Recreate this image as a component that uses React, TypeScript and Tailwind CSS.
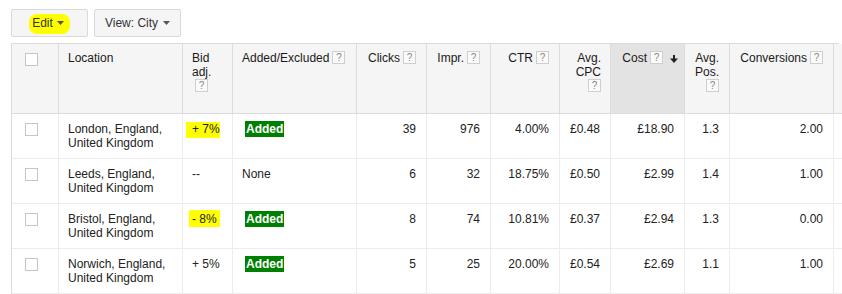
import React from "react";

const Q = ({ cls = "" }: { cls?: string }) => (
  <span
    className={
      "inline-block w-[13px] h-[13px] border border-[#cfcfcf] bg-[#fafafa] text-[#888] text-[10px] leading-[11px] text-center align-text-top " +
      cls
    }
  >
    ?
  </span>
);

const Check = () => (
  <span className="block w-[13px] h-[13px] border border-[#c6c6c6] bg-white" />
);

const Caret = () => (
  <svg width="7" height="4" viewBox="0 0 7 4" className="block">
    <polygon points="0,0 7,0 3.5,4" fill="#555" />
  </svg>
);

const cols =
  "grid grid-cols-[47px_124px_50px_124px_70px_64px_69px_51px_74px_45px_104px_100px]";

const hc = "bg-[#f5f5f5] border-r border-b border-[#dcdcdc] pt-[7px] leading-[14px] text-[#1a1a1a]";
const bc = "border-r border-b border-[#ececec] pt-[8px] leading-[14px]";

type Row = {
  loc: string;
  bid: React.ReactNode;
  added: React.ReactNode;
  clicks: string;
  impr: string;
  ctr: string;
  cpc: string;
  cost: string;
  pos: string;
  conv: string;
};

const AddedBadge = () => (
  <span className="ml-[3px] bg-[#008000] text-white font-bold px-[1px] py-[1px]">Added</span>
);

const rows: Row[] = [
  {
    loc: "London, England, United Kingdom",
    bid: <span className="bg-[#ffff00] -ml-[6px] pl-[6px] pb-[2px]">+ 7%</span>,
    added: <AddedBadge />,
    clicks: "39",
    impr: "976",
    ctr: "4.00%",
    cpc: "£0.48",
    cost: "£18.90",
    pos: "1.3",
    conv: "2.00",
  },
  {
    loc: "Leeds, England, United Kingdom",
    bid: <span>--</span>,
    added: <span>None</span>,
    clicks: "6",
    impr: "32",
    ctr: "18.75%",
    cpc: "£0.50",
    cost: "£2.99",
    pos: "1.4",
    conv: "1.00",
  },
  {
    loc: "Bristol, England, United Kingdom",
    bid: <span className="bg-[#ffff00] -ml-[3px] px-[3px] pt-[2px] pb-[1px]">- 8%</span>,
    added: <AddedBadge />,
    clicks: "8",
    impr: "74",
    ctr: "10.81%",
    cpc: "£0.37",
    cost: "£2.94",
    pos: "1.3",
    conv: "0.00",
  },
  {
    loc: "Norwich, England, United Kingdom",
    bid: <span>+ 5%</span>,
    added: <AddedBadge />,
    clicks: "5",
    impr: "25",
    ctr: "20.00%",
    cpc: "£0.54",
    cost: "£2.69",
    pos: "1.1",
    conv: "1.00",
  },
];

export default function App() {
  return (
    <div className="w-[842px] h-[294px] overflow-hidden bg-white pl-[11px] pt-[9px] font-['Liberation_Sans',Arial,sans-serif] text-[12px] text-[#222]">
      {/* Toolbar */}
      <div className="flex gap-[6px] h-[28px]">
        <button className="w-[77px] h-[28px] border border-[#d9d9d9] bg-[#f5f5f5] rounded-[2px] flex items-center justify-center text-[#333] text-[12px]">
          <span className="mt-[2px] h-[20px] pb-[2px] pl-[3px] pr-[6px] bg-[#ffff00] rounded-[8px] flex items-center gap-[4px]">
            <span>Edit</span>
            <Caret />
          </span>
        </button>
        <button className="w-[87px] h-[28px] border border-[#d9d9d9] bg-[#f5f5f5] rounded-[2px] flex items-center justify-center gap-[5px] text-[#333] text-[12px]">
          <span>View: City</span>
          <Caret />
        </button>
      </div>

      {/* Table */}
      <div className={cols + " mt-[6px] border-l border-t border-[#dcdcdc] w-[828px]"}>
        {/* Header */}
        <div className={hc + " h-[70px] pl-[13px] pt-[9px]"}>
          <Check />
        </div>
        <div className={hc + " pl-[9px]"}>Location</div>
        <div className={hc + " pl-[9px]"}>
          <div>Bid</div>
          <div>adj.</div>
          <div>
            <Q cls="ml-[3px]" />
          </div>
        </div>
        <div className={hc + " pl-[9px]"}>
          Added/Excluded<Q cls="ml-[3px]" />
        </div>
        <div className={hc + " text-right pr-[10px]"}>
          Clicks<Q cls="ml-[3px]" />
        </div>
        <div className={hc + " text-right pr-[10px]"}>
          Impr.<Q cls="ml-[3px]" />
        </div>
        <div className={hc + " text-right pr-[10px]"}>
          CTR<Q cls="ml-[3px]" />
        </div>
        <div className={hc + " text-right pr-[9px]"}>
          <div>Avg.</div>
          <div>CPC</div>
          <div>
            <Q />
          </div>
        </div>
        <div className={hc + " !bg-[#e3e3e3] text-right pr-[6px]"}>
          Cost<Q cls="ml-[3px]" />
          <svg width="8" height="8" viewBox="0 0 8 8" className="inline-block ml-[7px]">
            <rect x="3" y="0" width="2" height="5" fill="#222" />
            <polygon points="0,3.5 8,3.5 4,8" fill="#222" />
          </svg>
        </div>
        <div className={hc + " text-right pr-[10px]"}>
          <div>Avg.</div>
          <div>Pos.</div>
          <div>
            <Q />
          </div>
        </div>
        <div className={hc + " text-right pr-[10px]"}>
          Conversions<Q cls="ml-[3px]" />
        </div>
        <div className={hc} />

        {/* Body */}
        {rows.map((r, i) => (
          <React.Fragment key={i}>
            <div className={bc + " h-[45px] pl-[13px] pt-[9px]"}>
              <Check />
            </div>
            <div className={bc + " pl-[9px] pr-[4px]"}>{r.loc}</div>
            <div className={bc + " pl-[9px]"}>{r.bid}</div>
            <div className={bc + " pl-[9px]"}>{r.added}</div>
            <div className={bc + " text-right pr-[10px]"}>{r.clicks}</div>
            <div className={bc + " text-right pr-[10px]"}>{r.impr}</div>
            <div className={bc + " text-right pr-[10px]"}>{r.ctr}</div>
            <div className={bc + " text-right pr-[10px]"}>{r.cpc}</div>
            <div className={bc + " text-right pr-[10px]"}>{r.cost}</div>
            <div className={bc + " text-right pr-[10px]"}>{r.pos}</div>
            <div className={bc + " text-right pr-[10px]"}>{r.conv}</div>
            <div className={bc} />
          </React.Fragment>
        ))}
      </div>
    </div>
  );
}
